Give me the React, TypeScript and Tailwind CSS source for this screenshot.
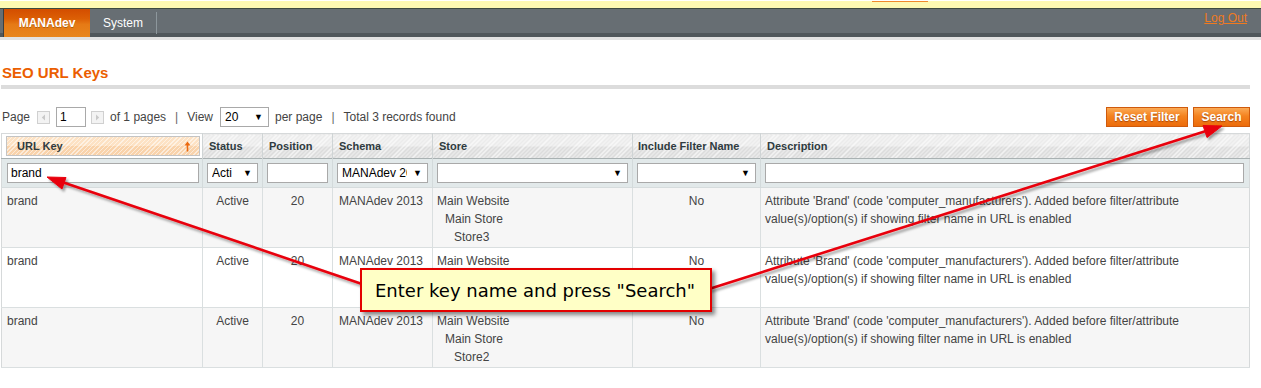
import React from "react";

const headBg =
  "[background-image:repeating-linear-gradient(135deg,rgba(255,255,255,0.75)_0px,rgba(255,255,255,0.75)_1px,transparent_1px,transparent_3px),linear-gradient(to_bottom,#ebebeb_0%,#ebebeb_50%,#dcdcdc_50%,#dcdcdc_100%)]";
const sortedBg =
  "[background-image:repeating-linear-gradient(135deg,rgba(255,255,255,0.55)_0px,rgba(255,255,255,0.55)_1px,transparent_1px,transparent_3px),linear-gradient(to_bottom,#fde2c4_0%,#fde2c4_50%,#f9d3ab_50%,#f9d3ab_100%)]";
const btnBg =
  "[background-image:linear-gradient(to_bottom,#fbaa55_0%,#f4821f_45%,#ec6c0b_100%)]";

const desc =
  "Attribute 'Brand' (code 'computer_manufacturers'). Added before filter/attribute value(s)/option(s) if showing filter name in URL is enabled";

const rows = [
  { store: "Store3", bg: "bg-[#f6f6f6]" },
  { store: "Store1", bg: "bg-white" },
  { store: "Store2", bg: "bg-[#f6f6f6]" },
];

function Caret() {
  return <span className="shrink-0 text-[9px] leading-none text-black">▼</span>;
}

function Select({ value, className }: { value: string; className: string }) {
  return (
    <div
      className={`flex h-[20px] items-center gap-[6px] border border-[#a9a9a9] bg-white pl-[4px] pr-[5px] text-[12px] text-black ${className}`}
    >
      <span className="min-w-0 flex-1 overflow-hidden whitespace-nowrap">{value}</span>
      <Caret />
    </div>
  );
}

function Input({ value, className }: { value?: string; className: string }) {
  return (
    <div
      className={`flex h-[20px] items-center border border-[#a9a9a9] bg-white px-[3px] text-[12px] text-black ${className}`}
    >
      {value}
    </div>
  );
}

function PagerArrow({ dir }: { dir: "l" | "r" }) {
  return (
    <span className="flex h-[13px] w-[13px] items-center justify-center border border-[#d0d0d0] bg-[#f3f3f3]">
      <svg width="5" height="7" viewBox="0 0 5 7">
        {dir === "l" ? (
          <path d="M4 0.5 L0.8 3.5 L4 6.5 Z" fill="#c9c9c9" />
        ) : (
          <path d="M1 0.5 L4.2 3.5 L1 6.5 Z" fill="#c9c9c9" />
        )}
      </svg>
    </span>
  );
}

function Th({ children, className = "" }: { children?: React.ReactNode; className?: string }) {
  return (
    <th
      className={`h-[24px] border-r border-[#cfd4d5] px-[6px] text-left align-middle text-[11px] font-bold text-[#2f3b40] ${headBg} ${className}`}
    >
      {children}
    </th>
  );
}

export default function App() {
  return (
    <div className="relative h-[388px] w-[1261px] overflow-hidden bg-white font-['Liberation_Sans',Arial,sans-serif] text-[12px] text-[#444]">
      {/* top notice strip */}
      <div className="h-[8px] border-b border-[#3d4a40] bg-[#fdf9b2]">
        <div className="ml-[872px] mt-px h-px w-[56px] bg-[#f08a2c]" />
      </div>

      {/* nav */}
      <div className="flex h-[28px] items-stretch pl-[3px] [background-image:linear-gradient(to_bottom,#676e73_0%,#676e73_86%,#50575b_86%,#50575b_100%)]">
        <div className="flex w-[87px] items-center justify-center border-l border-[#3b3f42] text-[12px] font-bold text-white [background-image:linear-gradient(to_bottom,#d34d00_0%,#dc5f05_35%,#e67a15_55%,#e8861d_100%)] [text-shadow:0_1px_0_rgba(0,0,0,0.25)]">
          MANAdev
        </div>
        <div className="flex w-[66px] items-center justify-center text-[12px] text-white">System</div>
        <div className="my-[3px] w-px bg-[#8d979c]" />
        <div className="ml-auto mr-[14px] pt-[2px] text-[12px] leading-[14px] text-[#f07a20] underline">Log Out</div>
      </div>
      <div className="h-[3px] bg-[#e2e2e2]" />

      <div className="w-[1250px] pl-px">
        {/* heading */}
        <h1 className="mt-[24px] pl-px text-[15px] font-bold leading-[18px] text-[#eb5e00]">SEO URL Keys</h1>
        <div className="mt-[3px] h-[4px] bg-[#dcdcdc]" />

        {/* pager */}
        <div className="mt-[18px] flex h-[20px] items-center pl-px">
          <span>Page</span>
          <span className="ml-[7px]">
            <PagerArrow dir="l" />
          </span>
          <Input value="1" className="ml-[6px] w-[30px]" />
          <span className="ml-[5px]">
            <PagerArrow dir="r" />
          </span>
          <span className="ml-[6px]">of 1 pages</span>
          <span className="ml-[9px] text-[#666]">|</span>
          <span className="ml-[9px]">View</span>
          <Select value="20" className="ml-[7px] w-[49px]" />
          <span className="ml-[6px]">per page</span>
          <span className="ml-[9px] text-[#666]">|</span>
          <span className="ml-[9px]">Total 3 records found</span>
          <div className="ml-auto flex gap-[5px]">
            <button
              className={`h-[20px] w-[82px] border border-[#cf5a0c] text-[12px] font-bold text-white [text-shadow:0_1px_1px_rgba(120,40,0,0.6)] ${btnBg}`}
            >
              Reset Filter
            </button>
            <button
              className={`h-[20px] w-[57px] border border-[#cf5a0c] text-[12px] font-bold text-white [text-shadow:0_1px_1px_rgba(120,40,0,0.6)] ${btnBg}`}
            >
              Search
            </button>
          </div>
        </div>

        {/* grid */}
        <table className="mt-[6px] w-full table-fixed border-collapse border border-[#d6d9da]">
          <colgroup>
            <col className="w-[201px]" />
            <col className="w-[60px]" />
            <col className="w-[70px]" />
            <col className="w-[100px]" />
            <col className="w-[200px]" />
            <col className="w-[128px]" />
            <col />
          </colgroup>
          <thead>
            <tr className="border-b border-[#a9b1b2]">
              <th className="h-[24px] border-r border-[#cfd4d5] p-[2px] pl-[4px] align-middle">
                <div
                  className={`flex h-[20px] items-center justify-between border border-[#c4c4c4] pl-[10px] pr-[8px] text-left text-[11px] font-bold text-[#2f3b40] ${sortedBg}`}
                >
                  <span>URL Key</span>
                  <svg width="7" height="11" viewBox="0 0 7 11">
                    <path d="M3.5 0.5 L6.5 4.5 L4.3 4.5 L4.3 10.5 L2.7 10.5 L2.7 4.5 L0.5 4.5 Z" fill="#eb6a10" />
                  </svg>
                </div>
              </th>
              <Th>Status</Th>
              <Th>Position</Th>
              <Th>Schema</Th>
              <Th>Store</Th>
              <Th className="pl-[5px]">Include Filter Name</Th>
              <Th className="border-r-0">Description</Th>
            </tr>
          </thead>
          <tbody>
            <tr className="border-b border-[#d6dcdd] bg-[#e2e9ea]">
              <td className="h-[29px] border-r border-[#d3dadb] pl-[5px] pr-[3px]">
                <Input value="brand" className="w-full" />
              </td>
              <td className="border-r border-[#d3dadb] px-[4px]">
                <Select value="Acti" className="w-full" />
              </td>
              <td className="border-r border-[#d3dadb] px-[4px]">
                <Input className="w-full" />
              </td>
              <td className="border-r border-[#d3dadb] px-[4px]">
                <Select value="MANAdev 2013" className="w-full" />
              </td>
              <td className="border-r border-[#d3dadb] px-[4px]">
                <Select value="" className="w-full" />
              </td>
              <td className="border-r border-[#d3dadb] px-[4px]">
                <Select value="" className="w-full" />
              </td>
              <td className="pl-[4px] pr-[5px]">
                <Input className="w-full" />
              </td>
            </tr>
            {rows.map((r, i) => (
              <tr key={i} className={`h-[60px] border-b border-[#dadfe0] align-top leading-[18px] ${r.bg}`}>
                <td className="border-r border-[#dadfe0] px-[5px] pt-[4px]">brand</td>
                <td className="border-r border-[#dadfe0] px-[5px] pt-[4px] text-center">Active</td>
                <td className="border-r border-[#dadfe0] px-[5px] pt-[4px] text-center">20</td>
                <td className="border-r border-[#dadfe0] px-[6px] pt-[4px] whitespace-nowrap">MANAdev 2013</td>
                <td className="border-r border-[#dadfe0] px-[4px] pt-[4px]">
                  <div>Main Website</div>
                  <div className="pl-[8px]">Main Store</div>
                  <div className="pl-[17px]">{r.store}</div>
                </td>
                <td className="border-r border-[#dadfe0] px-[5px] pt-[4px] text-center">No</td>
                <td className="px-[4px] pt-[4px]">{desc}</td>
              </tr>
            ))}
          </tbody>
        </table>
      </div>

      {/* annotation arrows */}
      <svg
        className="pointer-events-none absolute left-0 top-0"
        width="1261"
        height="388"
        viewBox="0 0 1261 388"
      >
        <defs>
          <filter id="sh" x="-5%" y="-5%" width="110%" height="120%">
            <feDropShadow dx="2" dy="2.5" stdDeviation="1.3" floodColor="#000" floodOpacity="0.35" />
          </filter>
        </defs>
        <g filter="url(#sh)" fill="#e8000a" stroke="#e8000a">
          <line x1="362" y1="284" x2="62" y2="182" strokeWidth="2.6" />
          <polygon points="47,177 66,177.5 62,189" strokeWidth="1" strokeLinejoin="round" />
          <line x1="709" y1="289" x2="1206" y2="131" strokeWidth="2.6" />
          <polygon points="1222,126 1207,137.5 1203,125.5" strokeWidth="1" strokeLinejoin="round" />
        </g>
      </svg>

      {/* callout */}
      <div className="absolute left-[360px] top-[268px] flex h-[44px] w-[352px] items-center border-2 border-[#e30000] bg-[#ffffc6] pl-[13px] font-['DejaVu_Sans',Verdana,sans-serif] text-[18px] text-black shadow-[3px_3px_4px_rgba(0,0,0,0.45)]">
        Enter key name and press "Search"
      </div>
    </div>
  );
}
